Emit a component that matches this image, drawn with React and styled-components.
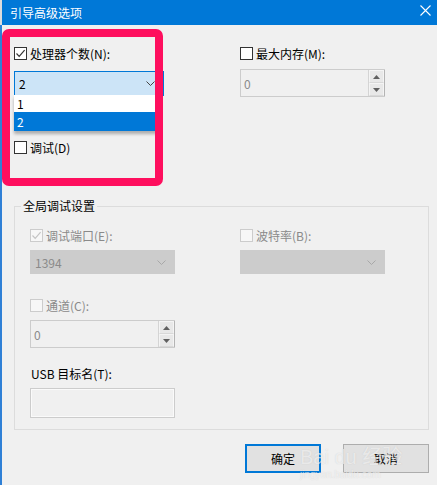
import React from "react";
import styled, { createGlobalStyle } from "styled-components";

const Global = createGlobalStyle`
  html, body { margin: 0; padding: 0; background: #f0f0f0; }
  body { font-family: "Noto Sans CJK SC", "Noto Sans", "Liberation Sans", sans-serif; font-size: 12px; color: #000; }
`;

const Page = styled.div`
  display: flex;
  width: 437px;
  height: 485px;
  overflow: hidden;
`;

const Edge = styled.div`
  width: 2px;
  flex: none;
  background: linear-gradient(#dcdcdc 0 25px, #2f80d6 25px);
`;

const Win = styled.div`
  flex: 1;
  display: flex;
  flex-direction: column;
  position: relative;
  background: #f0f0f0;
`;

const TitleBar = styled.div`
  height: 25px;
  background: #0078d7;
  color: #fff;
  display: flex;
  align-items: center;
  justify-content: space-between;
  padding: 0 5px 0 8px;
  font-size: 12px;
  line-height: 16px;
`;

const CloseBtn = styled.div`
  width: 14px;
  height: 14px;
  display: flex;
  align-items: center;
  justify-content: center;
  margin-bottom: 4px;
`;

const Body = styled.div`
  position: relative;
  flex: 1;
`;

const TopGrid = styled.div`
  display: grid;
  grid-template-columns: 143px 145px;
  column-gap: 83px;
  padding: 22px 0 0 12px;
`;

const Col = styled.div`
  display: flex;
  flex-direction: column;
  align-items: flex-start;
`;

const CheckRow = styled.div`
  display: flex;
  align-items: center;
  gap: 3px;
  height: 13px;
  line-height: 13px;
  color: ${(p) => (p.$disabled ? "#8a8a8a" : "#000")};
  margin-top: ${(p) => p.$mt || 0}px;
  white-space: nowrap;
`;

const Box = styled.div`
  width: 13px;
  height: 13px;
  box-sizing: border-box;
  border: 1px solid ${(p) => (p.$disabled ? "#cccccc" : "#333333")};
  background: ${(p) => (p.$disabled ? "#f7f7f7" : "#fff")};
  display: flex;
  align-items: center;
  justify-content: center;
  flex: none;
`;

const Combo = styled.div`
  position: relative;
  box-sizing: border-box;
  width: ${(p) => p.$w || 145}px;
  height: ${(p) => p.$h || 24}px;
  margin-top: ${(p) => p.$mt || 0}px;
  border: 1px solid ${(p) => (p.$active ? "#0078d7" : "#cccccc")};
  background: ${(p) => (p.$active ? "#cce4f7" : "#cccccc")};
  color: ${(p) => (p.$active ? "#000" : "#8a8a8a")};
  display: flex;
  align-items: center;
  justify-content: space-between;
  padding: 0 8px 0 4px;
  font-size: 12px;
`;

const DropList = styled.div`
  position: absolute;
  left: -1px;
  top: 100%;
  width: 145px;
  background: #fff;
  box-shadow: 0 3px 3px rgba(0, 0, 0, 0.28);
  z-index: 2;
`;

const DropItem = styled.div`
  height: ${(p) => p.$h}px;
  line-height: ${(p) => p.$h}px;
  padding-left: 3px;
  background: ${(p) => (p.$sel ? "#0078d7" : "#fff")};
  color: ${(p) => (p.$sel ? "#fff" : "#000")};
`;

const Spin = styled.div`
  box-sizing: border-box;
  width: 145px;
  height: 28px;
  margin-top: ${(p) => p.$mt || 0}px;
  border: 1px solid #cccccc;
  background: #f0f0f0;
  display: flex;
  align-items: center;
  justify-content: space-between;
  color: #8a8a8a;
  padding-left: 3px;
`;

const SpinBtns = styled.div`
  display: flex;
  flex-direction: column;
  height: 100%;
  width: 17px;
  box-sizing: border-box;
  border-left: 1px solid #d4d4d4;
  border-right: 1px solid #b4b4b4;
  margin-right: -1px;
`;

const SpinBtn = styled.div`
  flex: 1;
  display: flex;
  align-items: center;
  justify-content: center;
  background: #e8e8e8;
  border: 1px solid #f4f4f4;
  border-bottom-color: #d8d8d8;
`;

const Highlight = styled.div`
  position: absolute;
  left: 0;
  top: 4px;
  width: 161px;
  height: 157px;
  box-sizing: border-box;
  border: 8px solid #fe0f5e;
  border-radius: 7px;
  pointer-events: none;
  z-index: 3;
`;

const Group = styled.fieldset`
  margin: 44px 8px 0 12px;
  padding: 0;
  border: 1px solid #dcdcdc;
  min-width: 0;
`;

const Legend = styled.legend`
  margin-left: 6px;
  padding: 0 2px;
  line-height: 16px;
  font-size: 12px;
`;

const GroupInner = styled.div`
  padding: 15px 0 11px 15px;
  display: flex;
  flex-direction: column;
  align-items: flex-start;
`;

const Pair = styled.div`
  display: grid;
  grid-template-columns: 145px 145px;
  column-gap: 65px;
`;

const PlainLabel = styled.div`
  margin-top: 18px;
  line-height: 16px;
  padding-left: 1px;
`;

const TextBox = styled.div`
  box-sizing: border-box;
  width: 145px;
  height: 30px;
  margin-top: 6px;
  border: 1px solid #cccccc;
  box-shadow: inset 0 0 0 1px #fafafa;
  background: #f0f0f0;
`;

const ButtonRow = styled.div`
  display: flex;
  justify-content: flex-end;
  gap: 22px;
  padding: 14px 8px 0 0;
`;

const Btn = styled.div`
  box-sizing: border-box;
  width: ${(p) => p.$w}px;
  height: 29px;
  display: flex;
  align-items: center;
  justify-content: center;
  background: #e1e1e1;
  border: ${(p) => (p.$default ? "2px solid #0078d7" : "1px solid #adadad")};
  font-size: 12px;
`;

const Watermark = styled.div`
  position: absolute;
  left: 298px;
  top: 420px;
  color: rgba(255, 255, 255, 0.6);
  text-shadow: 0 0 1px rgba(150, 150, 150, 0.35);
  pointer-events: none;
  z-index: 4;
  font-family: "Liberation Sans", "Noto Sans CJK SC", sans-serif;
`;

const WmMain = styled.div`
  font-size: 20px;
  line-height: 24px;
  white-space: nowrap;
`;

const WmSub = styled.div`
  font-size: 10px;
  line-height: 12px;
  white-space: nowrap;
`;

const Check = ({ color }) => (
  <svg width="11" height="11" viewBox="0 0 11 11">
    <polyline points="1.5,5.5 4.2,8.3 9.6,2.2" fill="none" stroke={color} strokeWidth="1.2" />
  </svg>
);

const CheckBox = ({ checked, disabled, label, mt }) => (
  <CheckRow $disabled={disabled} $mt={mt}>
    <Box $disabled={disabled}>{checked && <Check color={disabled ? "#c4c4c4" : "#333"} />}</Box>
    <span>{label}</span>
  </CheckRow>
);

const Chevron = ({ color }) => (
  <svg width="9" height="5" viewBox="0 0 9 5">
    <polyline points="0.5,0.5 4.5,4.5 8.5,0.5" fill="none" stroke={color} strokeWidth="1" />
  </svg>
);

const Tri = ({ up }) => (
  <svg width="7" height="4" viewBox="0 0 7 4">
    <polygon points={up ? "0,4 7,4 3.5,0" : "0,0 7,0 3.5,4"} fill="#606060" />
  </svg>
);

const SpinBox = ({ value, mt }) => (
  <Spin $mt={mt}>
    <span>{value}</span>
    <SpinBtns>
      <SpinBtn><Tri up /></SpinBtn>
      <SpinBtn><Tri /></SpinBtn>
    </SpinBtns>
  </Spin>
);

export default function App() {
  return (
    <Page>
      <Global />
      <Edge />
      <Win>
        <TitleBar>
          <span>引导高级选项</span>
          <CloseBtn>
            <svg width="11" height="11" viewBox="0 0 11 11">
              <path d="M0.5 0.5 L10.5 10.5 M10.5 0.5 L0.5 10.5" stroke="#fff" strokeWidth="1.1" />
            </svg>
          </CloseBtn>
        </TitleBar>
        <Body>
          <Highlight />
          <TopGrid>
            <Col>
              <CheckBox checked label="处理器个数(N):" />
              <Combo $active $mt={11} $h={25} $w={150}>
                <span>2</span>
                <Chevron color="#444" />
                <DropList>
                  <DropItem $h={17}>1</DropItem>
                  <DropItem $h={19} $sel>2</DropItem>
                </DropList>
              </Combo>
              <CheckBox label="调试(D)" mt={45} />
            </Col>
            <Col>
              <CheckBox label="最大内存(M):" />
              <SpinBox value="0" mt={9} />
            </Col>
          </TopGrid>
          <Group>
            <Legend>全局调试设置</Legend>
            <GroupInner>
              <Pair>
                <Col>
                  <CheckBox checked disabled label="调试端口(E):" />
                  <Combo $mt={8}>
                    <span>1394</span>
                    <Chevron color="#a8a8a8" />
                  </Combo>
                </Col>
                <Col>
                  <CheckBox disabled label="波特率(B):" />
                  <Combo $mt={8}>
                    <span />
                    <Chevron color="#a8a8a8" />
                  </Combo>
                </Col>
              </Pair>
              <CheckBox disabled label="通道(C):" mt={25} />
              <SpinBox value="0" mt={8} />
              <PlainLabel>USB 目标名(T):</PlainLabel>
              <TextBox />
            </GroupInner>
          </Group>
          <ButtonRow>
            <Btn $w={76} $default>确定</Btn>
            <Btn $w={86}>取消</Btn>
          </ButtonRow>
          <Watermark>
            <WmMain>Bai du 经验</WmMain>
            <WmSub>jingyan.baidu.com</WmSub>
          </Watermark>
        </Body>
      </Win>
    </Page>
  );
}
